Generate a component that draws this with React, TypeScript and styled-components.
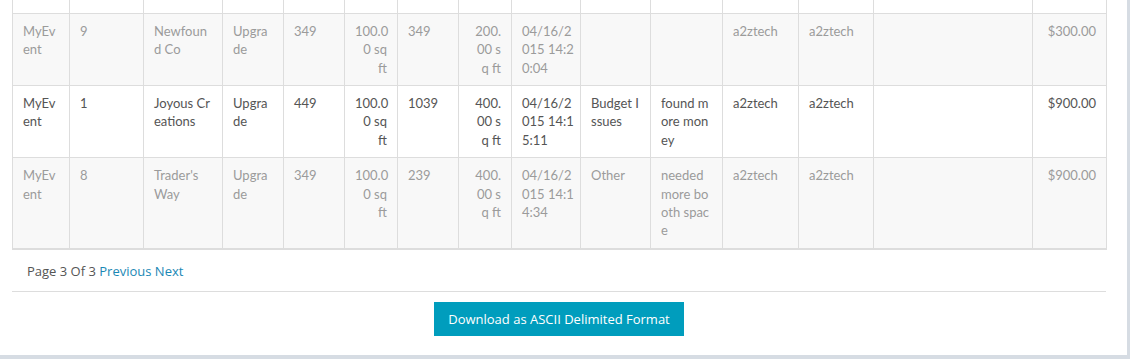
import React from 'react';
import styled, { createGlobalStyle } from 'styled-components';

type Align = 'left' | 'right';

interface Column {
  label: string;
  width: number;
  align: Align;
}

interface Entry {
  muted?: boolean;
  cells: string[];
}

const GlobalStyle = createGlobalStyle`
  html, body {
    margin: 0;
    padding: 0;
    background-color: #d6dce3;
    overflow: hidden;
  }
`;

const Panel = styled.div`
  width: 1127px;
  box-sizing: border-box;
  background-color: #fff;
  padding: 0 21px 19px 12px;
`;

// the page is scrolled: only the bottom edge of the header row shows
const Table = styled.table`
  width: 1095px;
  margin-top: -51px;
  border-collapse: collapse;
  table-layout: fixed;
  font-family: Lato, 'Liberation Sans', sans-serif;
  font-size: 13px;
  line-height: 18.4px;
`;

const HeadCell = styled.th<{ $align: Align }>`
  padding: 8px 10px 18px;
  border: 1px solid #ddd;
  text-align: ${(p) => p.$align};
  vertical-align: bottom;
  white-space: pre;
  font-weight: 700;
  color: #444;
  background-color: #fff;
`;

const Row = styled.tr<{ $muted?: boolean }>`
  background-color: ${(p) => (p.$muted ? '#f8f8f8' : '#fff')};
  color: ${(p) => (p.$muted ? '#9b9b9b' : '#555')};

  &:last-child td {
    border-bottom-width: 2px;
  }
`;

const Cell = styled.td<{ $align: Align }>`
  padding: 8px 10px;
  border: 1px solid #ddd;
  text-align: ${(p) => p.$align};
  vertical-align: top;
  white-space: pre;
`;

const Pager = styled.div`
  padding: 11px 15px 10px;
  font-family: 'Open Sans', 'Liberation Sans', sans-serif;
  font-size: 13px;
  line-height: 20px;
  color: #555;
`;

const PagerLink = styled.a`
  color: #1a88b5;
  text-decoration: none;
  cursor: pointer;
`;

const Footer = styled.div`
  display: flex;
  justify-content: center;
  border-top: 1px solid #ddd;
  padding-top: 10px;
`;

const DownloadButton = styled.button`
  height: 34px;
  padding: 0 14px;
  border: none;
  background-color: #009dbd;
  color: #fff;
  font-family: 'Open Sans', 'Liberation Sans', sans-serif;
  font-size: 13px;
  cursor: pointer;
`;

const columns: Column[] = [
  { label: 'Event', width: 57, align: 'left' },
  { label: 'ID', width: 74, align: 'left' },
  { label: 'Exhibitor', width: 79, align: 'left' },
  { label: 'Action', width: 61, align: 'left' },
  { label: 'Booth', width: 61, align: 'left' },
  { label: 'Size\nUp', width: 53, align: 'left' },
  { label: 'New', width: 61, align: 'left' },
  { label: 'Size', width: 53, align: 'right' },
  { label: 'Date', width: 69, align: 'left' },
  { label: 'Reason', width: 70, align: 'left' },
  { label: 'Notes', width: 72, align: 'left' },
  { label: 'Created', width: 76, align: 'left' },
  { label: 'Edited', width: 75, align: 'left' },
  { label: 'Comment', width: 159, align: 'left' },
  { label: 'Total', width: 74, align: 'right' },
];

const cellAlign: Align[] = columns.map((c, i) => (i === 5 ? 'right' : c.align));

const entries: Entry[] = [
  {
    muted: true,
    cells: [
      'MyEv\nent', '9', 'Newfoun\nd Co', 'Upgra\nde', '349', '100.0\n0 sq\nft', '349',
      '200.\n00 s\nq ft', '04/16/2\n015 14:2\n0:04', '', '', 'a2ztech', 'a2ztech', '', '$300.00',
    ],
  },
  {
    cells: [
      'MyEv\nent', '1', 'Joyous Cr\neations', 'Upgra\nde', '449', '100.0\n0 sq\nft', '1039',
      '400.\n00 s\nq ft', '04/16/2\n015 14:1\n5:11', 'Budget I\nssues', 'found m\nore mon\ney',
      'a2ztech', 'a2ztech', '', '$900.00',
    ],
  },
  {
    muted: true,
    cells: [
      'MyEv\nent', '8', "Trader's\nWay", 'Upgra\nde', '349', '100.0\n0 sq\nft', '239',
      '400.\n00 s\nq ft', '04/16/2\n015 14:1\n4:34', 'Other', 'needed\nmore bo\noth spac\ne',
      'a2ztech', 'a2ztech', '', '$900.00',
    ],
  },
];

const App: React.FC = () => {
  return (
    <>
      <GlobalStyle />
      <Panel>
        <Table>
          <colgroup>
            {columns.map((c) => (
              <col key={c.label} style={{ width: c.width }} />
            ))}
          </colgroup>
          <thead>
            <tr>
              {columns.map((c) => (
                <HeadCell key={c.label} $align={c.align}>{c.label}</HeadCell>
              ))}
            </tr>
          </thead>
          <tbody>
            {entries.map((entry, r) => (
              <Row key={r} $muted={entry.muted}>
                {entry.cells.map((text, i) => (
                  <Cell key={i} $align={cellAlign[i]}>{text}</Cell>
                ))}
              </Row>
            ))}
          </tbody>
        </Table>
        <Pager>
          Page 3 Of 3 <PagerLink>Previous</PagerLink> <PagerLink>Next</PagerLink>
        </Pager>
        <Footer>
          <DownloadButton>Download as ASCII Delimited Format</DownloadButton>
        </Footer>
      </Panel>
    </>
  );
};

export default App;
